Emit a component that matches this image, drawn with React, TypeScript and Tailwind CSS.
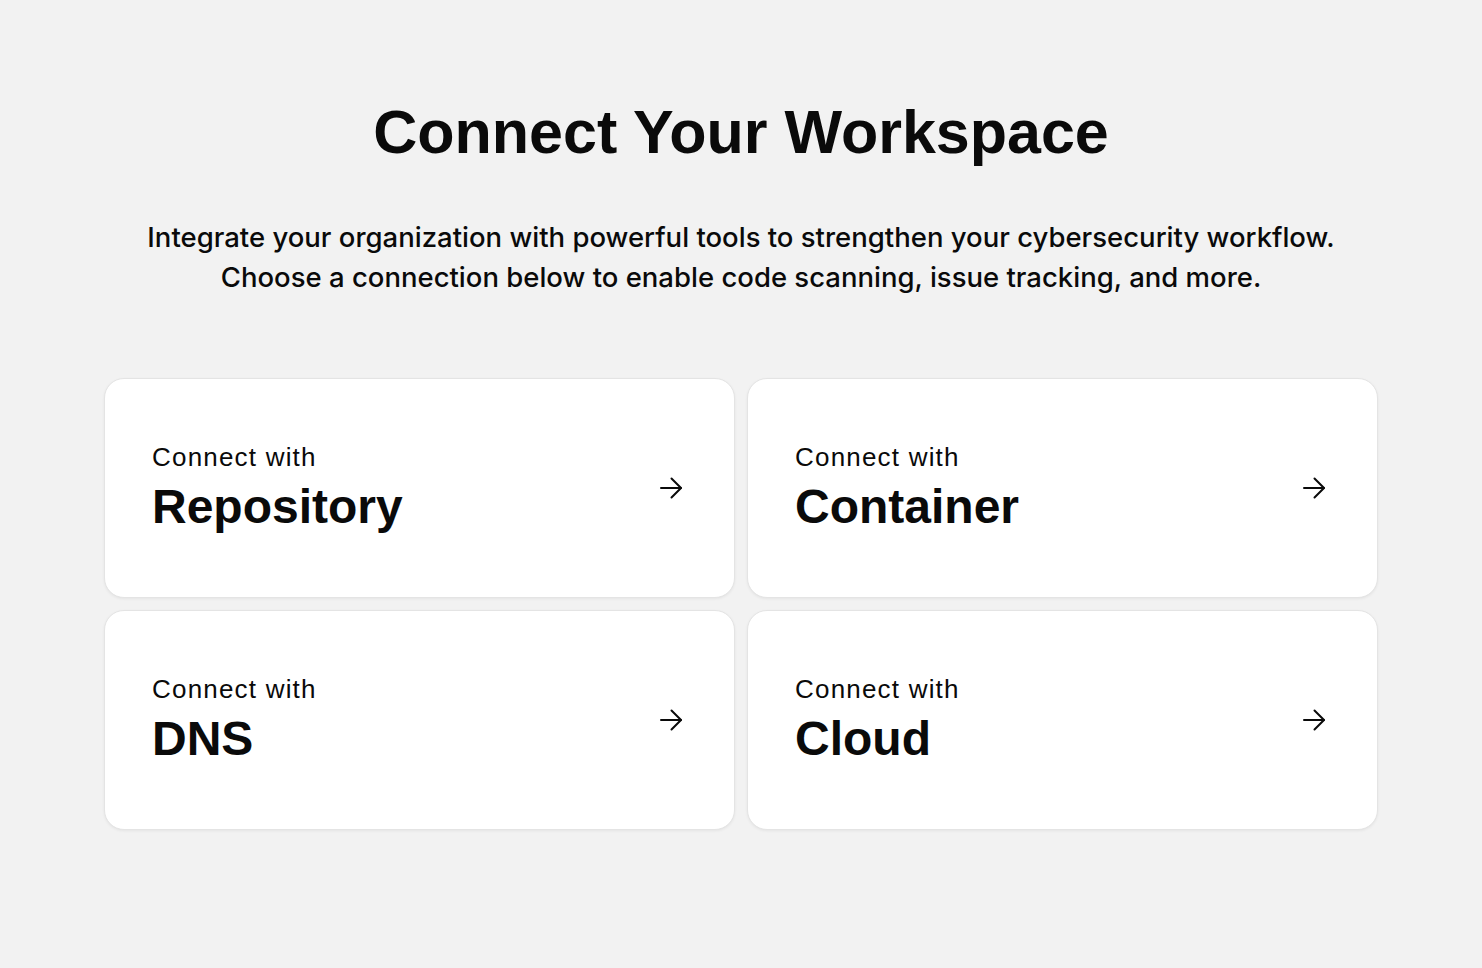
import React from "react";

const items = ["Repository", "Container", "DNS", "Cloud"];

function Arrow() {
  return (
    <svg width="24" height="24" viewBox="0 0 24 24" fill="none" stroke="#0a0a0a" strokeWidth="2" strokeLinecap="round" strokeLinejoin="round">
      <path d="M2 12h20" />
      <path d="M12.5 2.5 22 12l-9.5 9.5" />
    </svg>
  );
}

export default function App() {
  return (
    <div className="min-h-screen w-full bg-[#f2f2f2] text-[#0a0a0a]" style={{ fontFamily: "'Liberation Sans', Arial, sans-serif" }}>
      <div className="mx-auto flex w-[1274px] flex-col items-center pt-[96px]">
        <h1 className="text-[61px] font-bold leading-[72px]">Connect Your Workspace</h1>
        <p className="mt-[49px] text-center text-[27.5px] font-medium leading-[40px]" style={{ fontFamily: "Inter, sans-serif" }}>
          Integrate your organization with powerful tools to strengthen your cybersecurity workflow.
          <br />
          Choose a connection below to enable code scanning, issue tracking, and more.
        </p>
        <div className="mt-[81px] grid w-full grid-cols-2 gap-[12px]">
          {items.map((t) => (
            <div key={t} className="flex h-[220px] items-center justify-between rounded-[20px] border border-[#e4e4e4] bg-white pl-[47px] pr-[51px] shadow-[0_1px_3px_rgba(0,0,0,0.06)]">
              <div className="flex flex-col">
                <span className="text-[26px] leading-[32px] tracking-[1.2px]">Connect with</span>
                <span className="mt-[6px] text-[48px] font-bold leading-[56px]">{t}</span>
              </div>
              <Arrow />
            </div>
          ))}
        </div>
      </div>
    </div>
  );
}
